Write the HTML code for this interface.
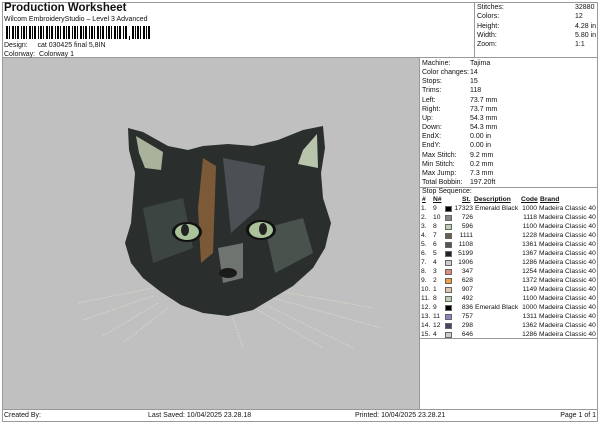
<!DOCTYPE html>
<html><head><meta charset="utf-8"><style>
*{margin:0;padding:0;box-sizing:border-box}
body{width:600px;height:424px;background:#fff;font-family:"Liberation Sans",Arial,sans-serif;font-size:7px;color:#111;position:relative;overflow:hidden}
.a{position:absolute;white-space:nowrap}
.col{position:absolute;top:204px;line-height:9px;font-size:6.7px;white-space:nowrap}
.sws{display:flex;flex-direction:column}
.sw{display:block;width:7px;height:6px;margin:1.5px 0;border:1px solid #666}
</style></head><body>
<div class="a" style="left:2px;top:2px;width:596px;height:420px;border:1px solid #999"></div>
<div class="a" style="left:474px;top:2px;width:1px;height:55px;background:#999"></div>
<div class="a" style="left:2px;top:57px;width:596px;height:1px;background:#999"></div>
<div class="a" style="left:4px;top:2px;font-size:11.5px;font-weight:bold">Production Worksheet</div>
<div class="a" style="left:4px;top:16px">Wilcom EmbroideryStudio – Level 3 Advanced</div>
<svg class="a" style="left:6px;top:26px" width="150" height="16">
<g fill="#000">
<rect x="0" y="0" width="2" height="13"/><rect x="3" y="0" width="1" height="13"/><rect x="6" y="0" width="2" height="13"/><rect x="9" y="0" width="1" height="13"/><rect x="11" y="0" width="2" height="13"/><rect x="15" y="0" width="1" height="13"/><rect x="17" y="0" width="2" height="13"/><rect x="20" y="0" width="1" height="13"/><rect x="23" y="0" width="2" height="13"/><rect x="26" y="0" width="1" height="13"/><rect x="28" y="0" width="2" height="13"/><rect x="32" y="0" width="1" height="13"/><rect x="34" y="0" width="2" height="13"/><rect x="37" y="0" width="1" height="13"/><rect x="40" y="0" width="2" height="13"/><rect x="43" y="0" width="1" height="13"/><rect x="45" y="0" width="2" height="13"/><rect x="49" y="0" width="1" height="13"/><rect x="51" y="0" width="2" height="13"/><rect x="54" y="0" width="1" height="13"/><rect x="57" y="0" width="2" height="13"/><rect x="60" y="0" width="1" height="13"/><rect x="62" y="0" width="2" height="13"/><rect x="66" y="0" width="1" height="13"/><rect x="68" y="0" width="2" height="13"/><rect x="71" y="0" width="1" height="13"/><rect x="74" y="0" width="2" height="13"/><rect x="77" y="0" width="1" height="13"/><rect x="79" y="0" width="2" height="13"/><rect x="83" y="0" width="1" height="13"/><rect x="85" y="0" width="2" height="13"/><rect x="88" y="0" width="1" height="13"/><rect x="91" y="0" width="2" height="13"/><rect x="94" y="0" width="1" height="13"/><rect x="96" y="0" width="2" height="13"/><rect x="100" y="0" width="1" height="13"/><rect x="102" y="0" width="2" height="13"/><rect x="105" y="0" width="1" height="13"/><rect x="108" y="0" width="2" height="13"/><rect x="111" y="0" width="1" height="13"/><rect x="113" y="0" width="2" height="13"/><rect x="117" y="0" width="1" height="13"/><rect x="119" y="0" width="2" height="13"/><rect x="123" y="10" width="1" height="4"/><rect x="126" y="0" width="2" height="13"/><rect x="129" y="0" width="1" height="13"/><rect x="131" y="0" width="2" height="13"/><rect x="134" y="0" width="1" height="13"/><rect x="137" y="0" width="2" height="13"/><rect x="140" y="0" width="1" height="13"/><rect x="142" y="0" width="2" height="13"/>
</g></svg>
<div class="a" style="left:4px;top:42px">Design:&nbsp;&nbsp;&nbsp;&nbsp; cat 030425 final 5,8IN</div>
<div class="a" style="left:4px;top:51px">Colorway:&nbsp; Colorway 1</div>
<div class="a" style="left:477px;top:3px;line-height:9.3px">Stitches:<br>Colors:<br>Height:<br>Width:<br>Zoom:</div>
<div class="a" style="left:575px;top:3px;line-height:9.3px">32880<br>12<br>4.28 in<br>5.80 in<br>1:1</div>

<div class="a" style="left:3px;top:58px;width:416px;height:351px;background:#c0c0c0"></div>
<div class="a" style="left:419px;top:58px;width:1px;height:351px;background:#999"></div>
<div class="a" style="left:420px;top:187px;width:178px;height:1px;background:#999"></div>
<div class="a" style="left:420px;top:338px;width:178px;height:1px;background:#999"></div>
<div class="a" style="left:2px;top:409px;width:596px;height:1px;background:#999"></div>

<svg class="a" style="left:3px;top:58px" width="416" height="351">
<g stroke="#ddd8c8" stroke-width="1" stroke-dasharray="1.5 1.5" fill="none">
<path d="M150 230 L75 245"/><path d="M150 238 L80 262"/><path d="M155 245 L100 278"/><path d="M165 250 L120 285"/>
<path d="M270 232 L370 250"/><path d="M270 240 L378 270"/><path d="M265 248 L350 290"/><path d="M255 252 L320 290"/><path d="M230 260 L240 290"/>
</g>
<path d="M125 70 L140 74 L165 88 L185 92 L200 88 L225 86 L250 88 L275 82 L300 72 L320 68 L322 90 L318 115 L320 140 L328 165 L322 190 L310 210 L290 228 L270 240 L250 252 L225 258 L200 255 L178 247 L158 234 L140 220 L128 205 L122 185 L128 165 L130 140 L132 115 L126 92 Z" fill="#2a2e2c"/>
<path d="M133 78 L160 94 L158 112 L142 110 L136 95 Z" fill="#a9b29a"/>
<path d="M314 76 L300 92 L295 106 L315 110 Z" fill="#b8c4ac"/>
<path d="M200 100 L213 108 L210 195 L198 205 L195 150 Z" fill="#7d5a37"/>
<path d="M220 100 L262 108 L256 150 L228 175 Z" fill="#4b5055"/>
<path d="M140 150 L180 140 L190 190 L150 205 Z" fill="#3d4542"/>
<path d="M262 170 L300 160 L310 195 L272 215 Z" fill="#4a524e"/>
<path d="M215 190 L240 185 L240 220 L220 225 Z" fill="#6f7470"/>
<ellipse cx="184" cy="174" rx="15" ry="10" fill="#111"/>
<ellipse cx="184" cy="174" rx="12" ry="8" fill="#a9c29a"/>
<ellipse cx="182" cy="172" rx="4" ry="6" fill="#222"/>
<ellipse cx="258" cy="172" rx="15" ry="10" fill="#111"/>
<ellipse cx="258" cy="172" rx="12" ry="8" fill="#a9c29a"/>
<ellipse cx="260" cy="171" rx="4" ry="6" fill="#222"/>
<ellipse cx="225" cy="215" rx="9" ry="5" fill="#1a1a1a"/>
</svg>

<div class="a" style="left:422px;top:59px;line-height:9.15px">Machine:<br>Color changes:<br>Stops:<br>Trims:<br>Left:<br>Right:<br>Up:<br>Down:<br>EndX:<br>EndY:<br>Max Stitch:<br>Min Stitch:<br>Max Jump:<br>Total Bobbin:</div>
<div class="a" style="left:470px;top:59px;line-height:9.15px">Tajima<br>14<br>15<br>118<br>73.7 mm<br>73.7 mm<br>54.3 mm<br>54.3 mm<br>0.00 in<br>0.00 in<br>9.2 mm<br>0.2 mm<br>7.3 mm<br>197.20ft</div>
<div class="a" style="left:422px;top:188px">Stop Sequence:</div>
<div class="a" style="left:422px;top:196px;font-size:6.7px;font-weight:bold;text-decoration:underline">#</div>
<div class="a" style="left:433px;top:196px;font-size:6.7px;font-weight:bold;text-decoration:underline">N#</div>
<div class="a" style="left:462px;top:196px;font-size:6.7px;font-weight:bold;text-decoration:underline">St.</div>
<div class="a" style="left:474px;top:196px;font-size:6.7px;font-weight:bold;text-decoration:underline">Description</div>
<div class="a" style="left:521px;top:196px;font-size:6.7px;font-weight:bold;text-decoration:underline">Code</div>
<div class="a" style="left:540px;top:196px;font-size:6.7px;font-weight:bold;text-decoration:underline">Brand</div>

<div class="col" style="left:421px">1.<br>2.<br>3.<br>4.<br>5.<br>6.<br>7.<br>8.<br>9.<br>10.<br>11.<br>12.<br>13.<br>14.<br>15.</div>
<div class="col" style="left:433px">9<br>10<br>8<br>7<br>6<br>5<br>4<br>3<br>2<br>1<br>8<br>9<br>11<br>12<br>4</div>
<div class="col sws" style="left:445px"><span class="sw" style="background:#000"></span><span class="sw" style="background:#888"></span><span class="sw" style="background:#bcd0b4"></span><span class="sw" style="background:#6a5e50"></span><span class="sw" style="background:#555"></span><span class="sw" style="background:#22222e"></span><span class="sw" style="background:#ccc"></span><span class="sw" style="background:#e08a80"></span><span class="sw" style="background:#f0a040"></span><span class="sw" style="background:#e0c8b0"></span><span class="sw" style="background:#bcd0b4"></span><span class="sw" style="background:#000"></span><span class="sw" style="background:#8888c0"></span><span class="sw" style="background:#4a4460"></span><span class="sw" style="background:#ccc"></span></div>
<div class="col" style="left:452px;width:21px;text-align:right">17323<br>726<br>596<br>1111<br>1108<br>5199<br>1906<br>347<br>628<br>907<br>492<br>836<br>757<br>298<br>646</div>
<div class="col" style="left:475px">Emerald Black<br><br><br><br><br><br><br><br><br><br><br>Emerald Black</div>
<div class="col" style="left:518px;width:19px;text-align:right">1000<br>1118<br>1100<br>1228<br>1361<br>1367<br>1286<br>1254<br>1372<br>1149<br>1100<br>1000<br>1311<br>1362<br>1286</div>
<div class="col" style="left:539px">Madeira Classic 40<br>Madeira Classic 40<br>Madeira Classic 40<br>Madeira Classic 40<br>Madeira Classic 40<br>Madeira Classic 40<br>Madeira Classic 40<br>Madeira Classic 40<br>Madeira Classic 40<br>Madeira Classic 40<br>Madeira Classic 40<br>Madeira Classic 40<br>Madeira Classic 40<br>Madeira Classic 40<br>Madeira Classic 40</div>

<div class="a" style="left:4px;top:412px">Created By:</div>
<div class="a" style="left:148px;top:412px">Last Saved: 10/04/2025 23.28.18</div>
<div class="a" style="left:355px;top:412px">Printed: 10/04/2025 23.28.21</div>
<div class="a" style="right:4px;top:412px">Page 1 of 1</div>
</body></html>
